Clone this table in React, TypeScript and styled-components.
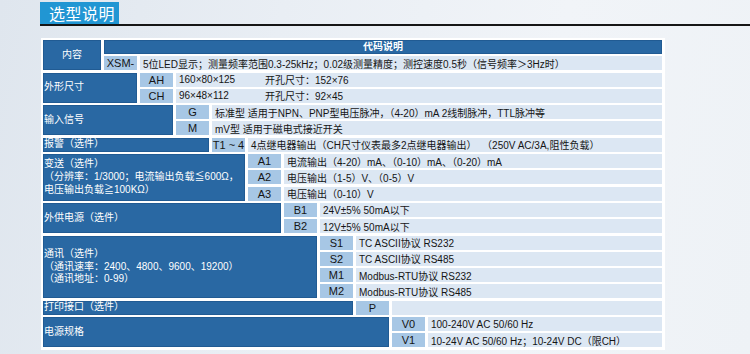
import React from "react";
import styled, { createGlobalStyle } from "styled-components";

const GlobalStyle = createGlobalStyle`
  html, body {
    margin: 0;
    padding: 0;
  }
  body {
    width: 750px;
    height: 354px;
    overflow: hidden;
    font-family: "Liberation Sans", "Noto Sans CJK SC", sans-serif;
    background: linear-gradient(100deg, #dfe6ee 0%, #e9eef4 35%, #f1f4f8 70%, #eef2f6 100%);
  }
`;

const Page = styled.div`
  padding: 2px 0 0 40px;
  height: 354px;
  box-sizing: border-box;
`;

const TitleBar = styled.div`
  border-bottom: 2px solid #161616;
  display: flex;
`;

const Tab = styled.div`
  width: 79px;
  height: 22px;
  background: #2196d3;
  color: #fff;
  font-family: "Noto Sans CJK SC", sans-serif;
  font-size: 16px;
  line-height: 22px;
  padding-left: 9px;
  box-sizing: border-box;
  letter-spacing: 0.5px;
`;

const TableWrap = styled.div`
  margin: 12px 0 0 1px;
  width: 624px;
  background: #fff;
  padding: 2px 3px 3px 2px;
  box-sizing: border-box;
`;

const Grid = styled.div`
  display: grid;
  grid-template-columns: 58px repeat(9, 33px) 1fr;
  grid-auto-rows: 14px;
  column-gap: 3px;
  row-gap: 2.3px;
`;

type Place = { $col: string; $row: string };

const Label = styled.div<Place & { $center?: boolean }>`
  grid-column: ${(p) => p.$col};
  grid-row: ${(p) => p.$row};
  background: #2968a3;
  box-shadow: inset 0 0 0 1px #215b93;
  color: #fff;
  font-size: 10px;
  line-height: 12.7px;
  display: flex;
  align-items: center;
  justify-content: ${(p) => (p.$center ? "center" : "flex-start")};
  padding-left: ${(p) => (p.$center ? "0" : "1px")};
  white-space: pre;
`;

const HeadBar = styled(Label)`
  font-weight: bold;
  font-size: 10px;
`;

const Code = styled.div<Place>`
  grid-column: ${(p) => p.$col};
  grid-row: ${(p) => p.$row};
  background: #a7c7e5;
  color: #151515;
  font-size: 11px;
  display: flex;
  align-items: center;
  justify-content: center;
  white-space: nowrap;
`;

const Text = styled.div<Place>`
  grid-column: ${(p) => p.$col};
  grid-row: ${(p) => p.$row};
  background: #dce7f3;
  color: #151515;
  font-size: 10px;
  display: flex;
  align-items: center;
  padding-left: 3px;
  white-space: pre;
`;

const Dim = styled.span`
  display: inline-block;
  width: 86px;
`;

type Row = { code: string; text: React.ReactNode };
type Group = { label: string; rows: Row[] };

const groups: Group[] = [
  {
    label: "内容",
    rows: [
      {
        code: "XSM-",
        text: "5位LED显示；测量频率范围0.3-25kHz；0.02级测量精度；测控速度0.5秒（信号频率＞3Hz时）",
      },
    ],
  },
  {
    label: "外形尺寸",
    rows: [
      { code: "AH", text: <><Dim>160×80×125</Dim>开孔尺寸：152×76</> },
      { code: "CH", text: <><Dim>96×48×112</Dim>开孔尺寸：92×45</> },
    ],
  },
  {
    label: "输入信号",
    rows: [
      { code: "G", text: "标准型 适用于NPN、PNP型电压脉冲，（4-20）mA 2线制脉冲，TTL脉冲等" },
      { code: "M", text: "mV型 适用于磁电式接近开关" },
    ],
  },
  {
    label: "报警（选件）",
    rows: [{ code: "T1 ~ 4", text: "4点继电器输出（CH尺寸仪表最多2点继电器输出）  （250V AC/3A,阻性负载）" }],
  },
  {
    label: "变送（选件）\n（分辨率：1/3000；电流输出负载≦600Ω，\n电压输出负载≧100KΩ）",
    rows: [
      { code: "A1", text: "电流输出（4-20）mA、（0-10）mA、（0-20）mA" },
      { code: "A2", text: "电压输出（1-5）V、（0-5）V" },
      { code: "A3", text: "电压输出（0-10）V" },
    ],
  },
  {
    label: "外供电源（选件）",
    rows: [
      { code: "B1", text: "24V±5% 50mA以下" },
      { code: "B2", text: "12V±5% 50mA以下" },
    ],
  },
  {
    label: "通讯（选件）\n（通讯速率：2400、4800、9600、19200）\n（通讯地址：0-99）",
    rows: [
      { code: "S1", text: "TC ASCII协议 RS232" },
      { code: "S2", text: "TC ASCII协议 RS485" },
      { code: "M1", text: "Modbus-RTU协议 RS232" },
      { code: "M2", text: "Modbus-RTU协议 RS485" },
    ],
  },
  {
    label: "打印接口（选件）",
    rows: [{ code: "P", text: "" }],
  },
  {
    label: "电源规格",
    rows: [
      { code: "V0", text: "100-240V AC 50/60 Hz" },
      { code: "V1", text: "10-24V AC 50/60 Hz；10-24V DC（限CH）" },
    ],
  },
];

const App = () => {
  // first grid row is the header bar, so groups start at row 2
  let row = 2;
  const cells: React.ReactNode[] = [];

  groups.forEach((g, k) => {
    const first = k === 0;
    const start = first ? 1 : row;
    const span = g.rows.length + (first ? 1 : 0);
    cells.push(
      <Label
        key={`l${k}`}
        $center={first}
        $col={`1 / span ${k + 1}`}
        $row={`${start} / span ${span}`}
      >
        {g.label}
      </Label>
    );
    if (first) {
      cells.push(
        <HeadBar key="head" $center $col="2 / -1" $row="1">
          代码说明
        </HeadBar>
      );
    }
    g.rows.forEach((r, i) => {
      cells.push(
        <Code key={`c${k}-${i}`} $col={`${k + 2}`} $row={`${row}`}>
          {r.code}
        </Code>,
        <Text key={`t${k}-${i}`} $col={`${k + 3} / -1`} $row={`${row}`}>
          {r.text}
        </Text>
      );
      row++;
    });
  });

  return (
    <>
      <GlobalStyle />
      <Page>
        <TitleBar>
          <Tab>选型说明</Tab>
        </TitleBar>
        <TableWrap>
          <Grid>{cells}</Grid>
        </TableWrap>
      </Page>
    </>
  );
};

export default App;
